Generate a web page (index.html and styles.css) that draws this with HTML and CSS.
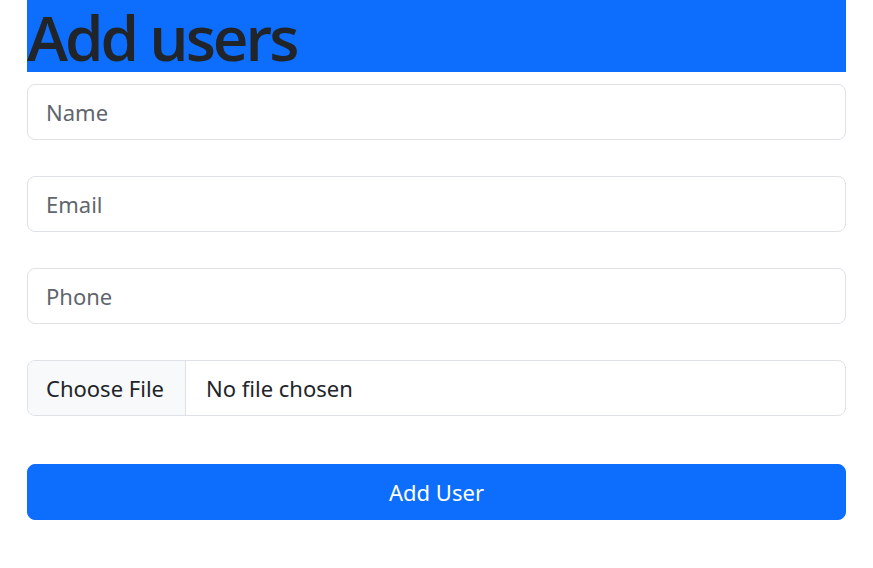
FILE: index.html
```html
<!DOCTYPE html>
<html lang="en">
<head>
<meta charset="utf-8">
<title>Add users</title>
<link rel="stylesheet" href="styles.css">
</head>
<body>
<div class="container">
  <h1 class="title">Add users</h1>
  <form class="form">
    <input class="field" type="text" placeholder="Name">
    <input class="field" type="email" placeholder="Email">
    <input class="field" type="text" placeholder="Phone">
    <div class="field file">
      <span class="file-btn">Choose File</span>
      <span class="file-name">No file chosen</span>
    </div>
    <button class="submit" type="button">Add User</button>
  </form>
</div>
</body>
</html>
```

FILE: styles.css
```css
* { box-sizing: border-box; }
html, body { margin: 0; padding: 0; background: #fff; }
body {
  font-family: "Noto Sans", "Open Sans", sans-serif;
  color: #212529;
}
.container { padding: 0 27px; }
.title {
  margin: 0;
  padding-top: 2px;
  line-height: 70px;
  background: #0d6efd;
  color: #212529;
  font-family: "Open Sans", "Noto Sans", sans-serif;
  font-size: 62px;
  font-weight: 600;
  letter-spacing: -3px;
  white-space: nowrap;
}
.form {
  display: flex;
  flex-direction: column;
  gap: 36px;
  padding-top: 12px;
}
.field {
  display: flex;
  align-items: center;
  width: 100%;
  height: 56px;
  padding: 0 18px;
  border: 1px solid #dee2e6;
  border-radius: 8px;
  font-family: inherit;
  font-size: 22px;
  color: #212529;
  background: #fff;
  outline: none;
}
.field::placeholder { color: #5f666d; opacity: 1; }
.file { padding: 0; overflow: hidden; }
.file-btn {
  display: flex;
  align-items: center;
  height: 100%;
  padding: 0 21px 0 18px;
  background: #f8f9fa;
  border-right: 1px solid #dee2e6;
}
.file-name { padding-left: 20px; }
.submit {
  margin-top: 12px;
  height: 56px;
  border: 1px solid #0d6efd;
  border-radius: 8px;
  background: #0d6efd;
  color: #fff;
  font-family: inherit;
  font-size: 22px;
}
```
